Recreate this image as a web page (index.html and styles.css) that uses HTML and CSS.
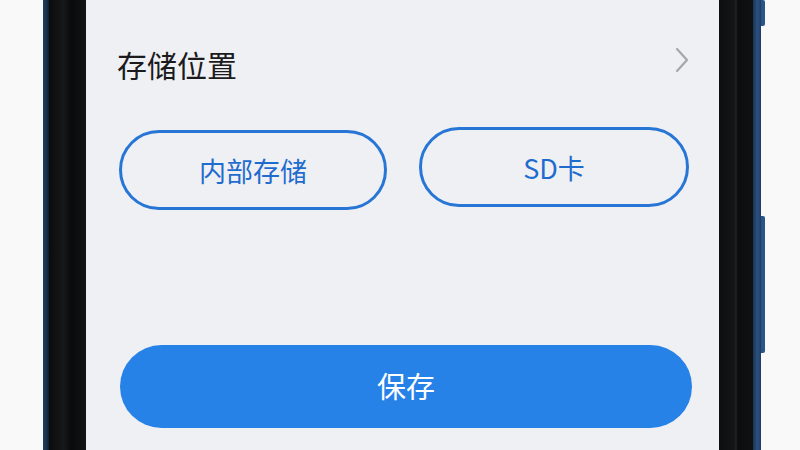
FILE: index.html
```html
<!DOCTYPE html>
<html lang="zh">
<head>
<meta charset="utf-8">
<link rel="stylesheet" href="styles.css">
</head>
<body>
<div class="page">
  <div class="phone">
    <div class="bezel-left">
      <div class="edge-blue"></div>
      <div class="edge-black"></div>
    </div>
    <div class="screen">
      <div class="title-row">
        <span class="title">存储位置</span>
        <svg class="chevron" width="14" height="26" viewBox="0 0 14 26"><path d="M2 2 L12 13 L2 24" fill="none" stroke="#a6a7ac" stroke-width="2.2" stroke-linecap="round" stroke-linejoin="round"/></svg>
      </div>
      <div class="choice-row">
        <div class="choice choice-left">内部存储</div>
        <div class="choice choice-right">SD卡</div>
      </div>
      <div class="save">保存</div>
    </div>
    <div class="bezel-right">
      <div class="edge-black"></div>
      <div class="edge-blue"></div>
      <div class="keys">
        <div class="key key-top"></div>
        <div class="key key-mid"></div>
      </div>
    </div>
  </div>
</div>
</body>
</html>
```

FILE: styles.css
```css
html, body {
  margin: 0;
  padding: 0;
}
body {
  font-family: "Noto Sans CJK SC", "Noto Sans", sans-serif;
  background: #f9f9fa;
}
.page {
  width: 800px;
  height: 450px;
  overflow: hidden;
  display: flex;
  background: #f9f9fa;
}
.phone {
  margin-left: 43px;
  display: flex;
  height: 450px;
}
.bezel-left {
  display: flex;
  width: 43px;
}
.bezel-left .edge-blue {
  width: 6px;
  background: linear-gradient(90deg, #223e5e, #1a3049 60%, #0f1a27);
}
.bezel-left .edge-black {
  flex: 1;
  background: linear-gradient(90deg, #0b0c0e, #17181a 40%, #0a0a0b 60%, #131416 100%);
}
.screen {
  width: 633px;
  background: #eff0f4;
  display: flex;
  flex-direction: column;
}
.title-row {
  margin-top: 44px;
  height: 40px;
  padding: 0 30px 0 31px;
  display: flex;
  align-items: center;
  justify-content: space-between;
}
.title {
  font-size: 30px;
  color: #1b1b1d;
  line-height: 40px;
}
.chevron {
  margin-top: -9px;
}
.choice-row {
  margin-top: 46px;
  padding-left: 33px;
  display: flex;
  gap: 32px;
}
.choice {
  height: 74px;
  border: 3px solid #2776d6;
  border-radius: 40px;
  display: flex;
  align-items: center;
  justify-content: center;
  color: #1f6cce;
  font-size: 27px;
}
.choice-left {
  width: 262px;
}
.choice-right {
  width: 264px;
  margin-top: -3px;
}
.save {
  margin-top: 135px;
  margin-left: 34px;
  width: 572px;
  height: 83px;
  border-radius: 42px;
  background: #2782e8;
  color: #ffffff;
  font-size: 29px;
  display: flex;
  align-items: center;
  justify-content: center;
  padding-bottom: 4px;
  box-sizing: border-box;
}
.bezel-right {
  display: flex;
  width: 48px;
}
.bezel-right .edge-black {
  width: 34px;
  background: linear-gradient(90deg, #0d0e10, #141517 45%, #222325 50%, #0c0d0f 55%, #101113);
}
.bezel-right .edge-blue {
  width: 8px;
  background: linear-gradient(90deg, #1b3552, #2b5283 60%, #1d3a5e);
}
.keys {
  width: 4px;
  display: flex;
  flex-direction: column;
}
.key {
  background: #2a5386;
  border-radius: 0 2px 2px 0;
}
.key-top {
  height: 26px;
}
.key-mid {
  margin-top: 190px;
  height: 137px;
}
```
